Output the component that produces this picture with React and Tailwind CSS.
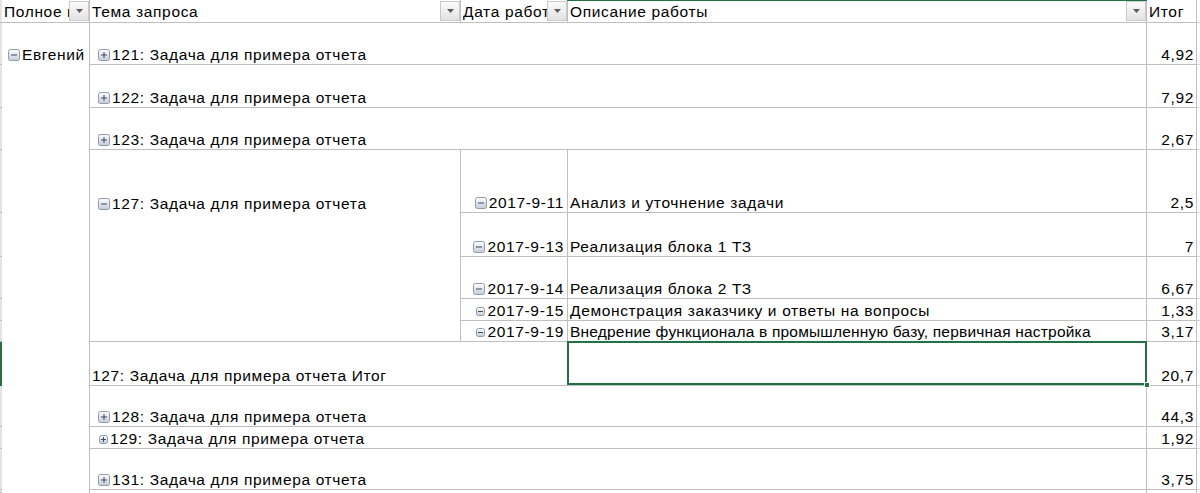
import React from "react";

function Toggle({ minus = false, small = false }) {
  const s = small ? 9 : 12;
  return (
    <svg width={s} height={s} viewBox={`0 0 ${s} ${s}`} className="flex-none">
      <defs>
        <linearGradient id={`g${s}`} x1="0" y1="0" x2="0" y2="1">
          <stop offset="0" stopColor="#ffffff" />
          <stop offset="1" stopColor="#c3ccd8" />
        </linearGradient>
      </defs>
      <rect x="0.5" y="0.5" width={s - 1} height={s - 1} rx="2" fill={`url(#g${s})`} stroke="#8f9bab" />
      <rect x={small ? 2 : 3} y={small ? 4 : 5.5} width={small ? 5 : 6} height="1" fill="#3d4b5e" />
      {!minus && <rect x={small ? 4 : 5.5} y={small ? 2 : 3} width="1" height={small ? 5 : 6} fill="#3d4b5e" />}
    </svg>
  );
}

function Drop() {
  return (
    <span className="flex h-[20px] w-[20px] flex-none items-center justify-center border border-[#c9c9c9] bg-gradient-to-b from-[#fbfbfb] to-[#e2e2e2]">
      <svg width="7" height="4" viewBox="0 0 7 4">
        <path d="M0 0h7L3.5 4z" fill="#5d5d5d" />
      </svg>
    </span>
  );
}

function Head({ col, text, drop = true, green = false }) {
  return (
    <div className={`${col} row-start-1 relative flex items-center border-b border-r border-[#bfbfbf] pl-[2px]`}>
      <span className="min-w-0 flex-1 overflow-hidden whitespace-nowrap">{text}</span>
      {drop && <Drop />}
      {green && <span className="absolute -left-px -right-px top-0 h-px bg-[#217346]" />}
    </div>
  );
}

function Num({ row, v }) {
  return (
    <div className={`${row} col-start-6 flex items-end justify-end border-b border-r border-[#bfbfbf] pr-[2px] pb-[1px]`}>
      {v}
    </div>
  );
}

function Grid({ row }) {
  return <div className={`${row} col-start-7 border-b border-[#d4d4d4]`} />;
}

function Strip({ row, green = false }) {
  return (
    <div
      className={`${row} col-start-1 border-b ${green ? "bg-[#217346] border-[#217346]" : "bg-[#e3e3e3] border-[#bdbdbd]"}`}
    />
  );
}

function Task({ row, label, small = false }) {
  return (
    <div className={`${row} col-start-3 col-span-3 flex items-end gap-[2px] border-b border-r border-[#bfbfbf] pl-[8px] pb-[1px]`}>
      <span className={`flex ${small ? "mb-[3px] ml-[1px]" : "mb-[2px]"}`}>
        <Toggle small={small} />
      </span>
      <span className="whitespace-nowrap">{label}</span>
    </div>
  );
}

function DateCell({ row, d, small = false }) {
  return (
    <div className={`${row} col-start-4 flex items-end justify-end gap-[2px] border-b border-r border-[#bfbfbf] pr-[3px] pb-[1px]`}>
      <span className={`flex ${small ? "mb-[3px]" : "mb-[2px]"}`}>
        <Toggle minus small={small} />
      </span>
      <span className="whitespace-nowrap">{d}</span>
    </div>
  );
}

function Desc({ row, t, tight = false }) {
  return (
    <div className={`${row} col-start-5 flex items-end border-b border-r border-[#bfbfbf] pl-[2px] pb-[1px]`}>
      <span className={`whitespace-nowrap ${tight ? "tracking-[0.2px]" : ""}`}>{t}</span>
    </div>
  );
}

export default function App() {
  return (
    <div className="grid h-[493px] w-[1200px] grid-cols-[2px_88px_371px_107px_579px_50px_1fr] grid-rows-[23px_42px_43px_42px_63px_44px_42px_22px_21px_44px_41px_22px_41px_1fr] overflow-hidden bg-white font-['Liberation_Sans',Arial,sans-serif] text-[15.5px] leading-[17px] tracking-[0.65px] text-black">
      {/* row header strip */}
      <Strip row="row-start-1" />
      <Strip row="row-start-2" />
      <Strip row="row-start-3" />
      <Strip row="row-start-4" />
      <Strip row="row-start-5" />
      <Strip row="row-start-6" />
      <Strip row="row-start-7" />
      <Strip row="row-start-8" />
      <Strip row="row-start-9" />
      <Strip row="row-start-10" green />
      <Strip row="row-start-11" />
      <Strip row="row-start-12" />
      <Strip row="row-start-13" />
      <Strip row="row-start-14" />

      {/* header */}
      <Head col="col-start-2" text="Полное имя" />
      <Head col="col-start-3" text="Тема запроса" />
      <Head col="col-start-4" text="Дата работы" />
      <Head col="col-start-5" text="Описание работы" green />
      <Head col="col-start-6" text="Итог" drop={false} />
      <Grid row="row-start-1" />

      {/* employee column */}
      <div className="col-start-2 row-start-2 row-span-13 flex flex-col border-r border-[#bfbfbf]">
        <div className="flex h-[41px] items-end gap-[2px] pl-[6px] pb-[1px]">
          <span className="mb-[2px] flex">
            <Toggle minus />
          </span>
          <span className="whitespace-nowrap">Евгений</span>
        </div>
      </div>

      {/* 121-123 */}
      <Task row="row-start-2" label="121: Задача для примера отчета" />
      <Num row="row-start-2" v="4,92" />
      <Grid row="row-start-2" />
      <Task row="row-start-3" label="122: Задача для примера отчета" />
      <Num row="row-start-3" v="7,92" />
      <Grid row="row-start-3" />
      <Task row="row-start-4" label="123: Задача для примера отчета" />
      <Num row="row-start-4" v="2,67" />
      <Grid row="row-start-4" />

      {/* 127 expanded */}
      <div className="col-start-3 row-start-5 row-span-5 flex flex-col border-b border-r border-[#bfbfbf]">
        <div className="flex h-[63px] items-end gap-[2px] pl-[8px] pb-[1px]">
          <span className="mb-[2px] flex">
            <Toggle minus />
          </span>
          <span className="whitespace-nowrap">127: Задача для примера отчета</span>
        </div>
      </div>

      <DateCell row="row-start-5" d="2017-9-11" />
      <Desc row="row-start-5" t="Анализ и уточнение задачи" />
      <Num row="row-start-5" v="2,5" />
      <Grid row="row-start-5" />

      <DateCell row="row-start-6" d="2017-9-13" />
      <Desc row="row-start-6" t="Реализация блока 1 ТЗ" />
      <Num row="row-start-6" v="7" />
      <Grid row="row-start-6" />

      <DateCell row="row-start-7" d="2017-9-14" />
      <Desc row="row-start-7" t="Реализация блока 2 ТЗ" />
      <Num row="row-start-7" v="6,67" />
      <Grid row="row-start-7" />

      <DateCell row="row-start-8" d="2017-9-15" small />
      <Desc row="row-start-8" t="Демонстрация заказчику и ответы на вопросы" />
      <Num row="row-start-8" v="1,33" />
      <Grid row="row-start-8" />

      <DateCell row="row-start-9" d="2017-9-19" small />
      <Desc row="row-start-9" t="Внедрение функционала в промышленную базу, первичная настройка" tight />
      <Num row="row-start-9" v="3,17" />
      <Grid row="row-start-9" />

      {/* total */}
      <div className="col-start-3 col-span-2 row-start-10 flex items-end border-b border-r border-[#bfbfbf] pl-[2px] pb-[1px]">
        <span className="whitespace-nowrap">127: Задача для примера отчета Итог</span>
      </div>
      <div className="relative col-start-5 row-start-10 border-b border-r border-[#bfbfbf]">
        <span className="absolute -left-px -right-px -top-px bottom-0 z-10 border-2 border-[#217346]" />
        <span className="absolute -bottom-[3px] -right-[4px] z-20 h-[6px] w-[6px] border border-white bg-[#217346]" />
      </div>
      <Num row="row-start-10" v="20,7" />
      <Grid row="row-start-10" />

      {/* 128-131 */}
      <Task row="row-start-11" label="128: Задача для примера отчета" />
      <Num row="row-start-11" v="44,3" />
      <Grid row="row-start-11" />
      <Task row="row-start-12" label="129: Задача для примера отчета" small />
      <Num row="row-start-12" v="1,92" />
      <Grid row="row-start-12" />
      <Task row="row-start-13" label="131: Задача для примера отчета" />
      <Num row="row-start-13" v="3,75" />
      <Grid row="row-start-13" />

      {/* partial next row */}
      <div className="col-start-3 col-span-3 row-start-14 border-r border-[#bfbfbf]" />
      <div className="col-start-6 row-start-14 border-r border-[#bfbfbf]" />
    </div>
  );
}
